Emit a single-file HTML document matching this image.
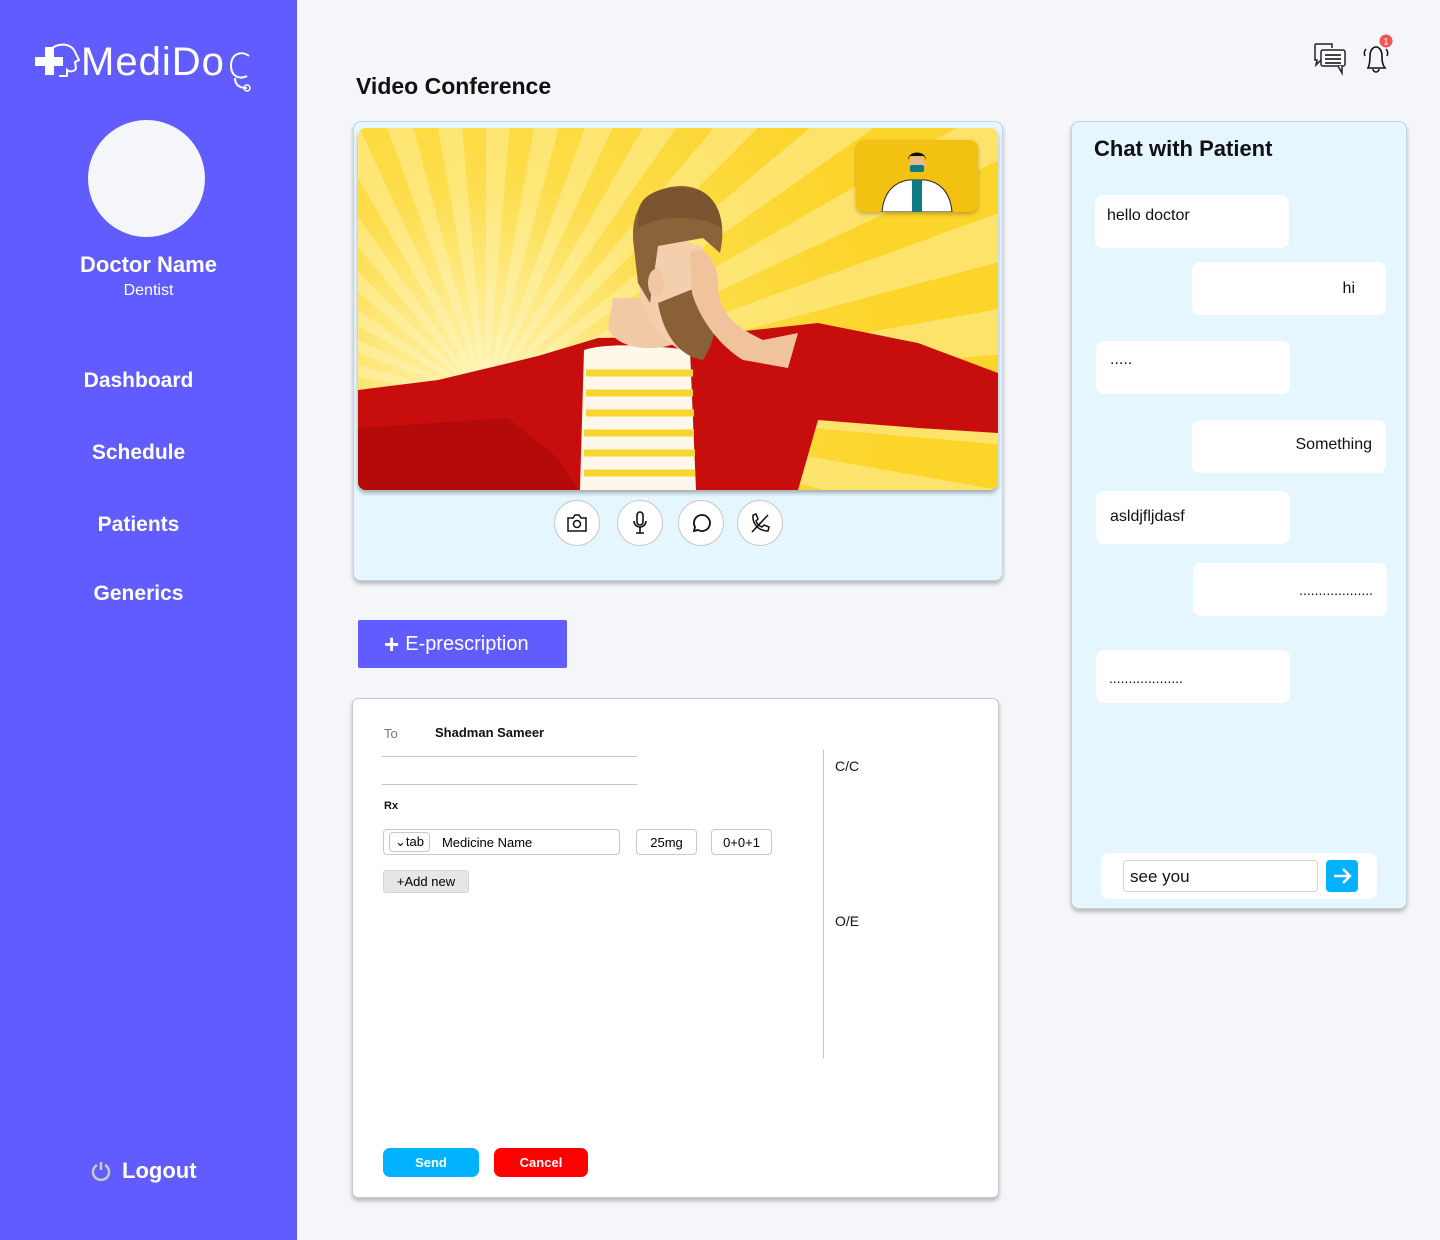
<!DOCTYPE html>
<html><head><meta charset="utf-8">
<style>
*{box-sizing:border-box;margin:0;padding:0}
body{width:1440px;height:1240px;background:#f5f6fa;font-family:"Liberation Sans",Arial,sans-serif;position:relative;overflow:hidden}
.abs{position:absolute}
.side{left:0;top:0;width:297px;height:1240px;background:#605cff;color:#fff}
.nav{position:absolute;width:297px;left:-10px;text-align:center;font-weight:bold;font-size:21px;color:#fff}
.card{background:#e5f6fe;border:1px solid #c9d3dc;border-radius:8px;box-shadow:0 3px 4px rgba(0,0,0,.25)}
.btnc{position:absolute;top:500px;width:46px;height:46px;border-radius:50%;background:#fff;border:1px solid #c8c8c8;display:flex;align-items:center;justify-content:center}
.bub{position:absolute;background:#fff;border-radius:8px;width:194px;height:53px;font-size:16px;color:#111}
.inp{position:absolute;border:1px solid #c9c9c9;border-radius:4px;height:26px;font-size:13px;display:flex;align-items:center}
</style></head><body>
<div class="abs side">
  <div class="abs" style="left:35px;top:38px;color:#fff">
    <svg width="50" height="44" style="position:absolute;left:0;top:4px" viewBox="0 0 50 44"><rect x="0" y="15" width="28" height="9" fill="#fff"/><rect x="10" y="5" width="9" height="28" fill="#fff"/><path d="M16 8 C20 1 36 0 40 10 L44 18 L40 20 L41 26 C40 30 34 30 32 28 L32 34 L24 34" stroke="#fff" stroke-width="2" fill="none"/></svg>
    <span style="position:absolute;left:46px;top:1px;font-family:'Liberation Sans',sans-serif;font-size:40px;letter-spacing:1px;line-height:46px">MediDo</span>
    <svg width="26" height="52" style="position:absolute;left:192px;top:10px" viewBox="0 0 26 52"><path d="M22 8 C14 2 4 6 4 18 C4 28 12 32 20 28 M8 30 C8 38 14 40 20 40" stroke="#fff" stroke-width="2" fill="none"/><circle cx="20" cy="40" r="3" stroke="#fff" stroke-width="1.5" fill="none"/></svg>
  </div>
  <div class="abs" style="left:88px;top:120px;width:117px;height:117px;border-radius:50%;background:#f5f6fa"></div>
  <div class="abs" style="left:0;width:297px;top:252px;text-align:center;font-weight:bold;font-size:22px">Doctor Name</div>
  <div class="abs" style="left:0;width:297px;top:282px;text-align:center;font-size:16px">Dentist</div>
  <div class="nav" style="top:369px">Dashboard</div>
  <div class="nav" style="top:441px">Schedule</div>
  <div class="nav" style="top:513px">Patients</div>
  <div class="nav" style="top:582px">Generics</div>
  <div class="abs" style="left:90px;top:1158px;font-weight:bold;font-size:22px;display:flex;align-items:center;gap:10px">
    <svg width="22" height="22" viewBox="0 0 22 22"><path d="M7 5 A8 8 0 1 0 15 5" stroke="#c8c8c8" stroke-width="2.5" fill="none"/><line x1="11" y1="2" x2="11" y2="10" stroke="#c8c8c8" stroke-width="2.5"/></svg>Logout</div>
</div>

<div class="abs" style="left:356px;top:73px;font-size:23px;font-weight:bold;color:#111">Video Conference</div>

<svg class="abs" style="left:1312px;top:42px" width="36" height="34" viewBox="0 0 36 34"><path d="M3 2 H20 V6 M3 2 V18 L5 18 L4 23 L9 18" stroke="#222" stroke-width="1.5" fill="none"/><rect x="9" y="8" width="24" height="16" rx="2" stroke="#222" stroke-width="1.5" fill="#fff"/><path d="M26 24 L30 31 L30 24" stroke="#222" stroke-width="1.5" fill="#fff"/><line x1="13" y1="13" x2="29" y2="13" stroke="#444" stroke-width="2"/><line x1="13" y1="17" x2="29" y2="17" stroke="#444" stroke-width="2"/><line x1="13" y1="21" x2="29" y2="21" stroke="#444" stroke-width="2"/></svg>
<svg class="abs" style="left:1358px;top:32px" width="40" height="44" viewBox="0 0 40 44"><g transform="translate(2,8)"><path d="M8 28 C10 24 10 20 10 16 C10 10 13 7 16 7 C19 7 22 10 22 16 C22 20 22 24 25 28 Z" stroke="#111" stroke-width="1.6" fill="none"/><path d="M13 29 A3 3 0 0 0 19 29" stroke="#111" stroke-width="1.5" fill="none"/><path d="M6 9 C4 11 4 14 5 16 M26 9 C28 11 28 14 27 16" stroke="#111" stroke-width="1.5" fill="none"/></g><circle cx="28" cy="9" r="6.5" fill="#f05555"/><text x="28" y="12.5" font-size="9" fill="#fff" text-anchor="middle" font-family="Liberation Sans">1</text></svg>

<div class="abs card" style="left:353px;top:121px;width:650px;height:460px"></div>
<div class="abs" style="left:358px;top:128px;width:640px;height:362px;border-radius:8px;overflow:hidden;background:repeating-conic-gradient(from 0deg at 20% 75%,#fde36a 0deg 5deg,#fcd52b 5deg 10deg);box-shadow:0 3px 4px rgba(0,0,0,.3)">
  <div class="abs" style="inset:0;background:radial-gradient(circle at 20% 70%,rgba(255,248,200,.9),rgba(255,240,150,.3) 35%,rgba(255,220,40,0) 70%)"></div>
  <svg class="abs" style="left:0;top:0" width="640" height="362" viewBox="0 0 640 362">
    <path d="M0 262 L80 252 L180 228 L240 210 L340 208 L460 195 L560 215 L640 245 L640 305 L560 300 L460 292 L440 362 L0 362 Z" fill="#c80d0d"/>
    <path d="M0 300 L150 290 L200 330 L220 362 L0 362 Z" fill="#b50a0a"/>
    <path d="M226 222 C250 214 300 218 332 222 L338 362 L222 362 Z" fill="#fff8ea"/>
    <g stroke="#f7d52f" stroke-width="7"><line x1="228" y1="245" x2="335" y2="245"/><line x1="228" y1="265" x2="335" y2="265"/><line x1="228" y1="285" x2="336" y2="285"/><line x1="226" y1="305" x2="336" y2="305"/><line x1="226" y1="325" x2="337" y2="325"/><line x1="226" y1="345" x2="337" y2="345"/></g>
    <path d="M250 200 C258 222 300 226 325 212 L322 170 L255 170 Z" fill="#f1c9a5"/>
    <path d="M285 95 C278 125 278 150 284 175 C295 205 315 220 330 225 C350 210 355 170 345 120 Z" fill="#f3cfae"/>
    <path d="M300 175 C305 205 320 228 345 232 C362 205 362 175 350 155 Z" fill="#8a6038"/>
    <path d="M276 120 C270 80 290 58 325 58 C358 60 370 90 362 125 L345 110 L300 118 L292 175 L280 155 Z" fill="#8b6339"/>
    <path d="M280 85 C282 65 305 58 330 60 C352 62 362 78 364 100 C345 88 305 85 280 100 Z" fill="#7a5530"/>
    <ellipse cx="298" cy="155" rx="8" ry="14" fill="#f0c7a2"/>
    <path d="M332 125 C348 115 362 135 360 165 C366 190 380 200 405 212 L440 205 L430 240 L385 232 C362 218 342 192 334 165 Z" fill="#f0c39c"/>
  </svg>
  <div class="abs" style="left:498px;top:12px;width:122px;height:72px;background:#f3c112;border-radius:8px;box-shadow:0 2px 4px rgba(0,0,0,.25);overflow:hidden">
    <svg width="122" height="72" viewBox="0 0 122 72"><path d="M26 72 C28 50 40 42 52 40 L70 40 C82 42 94 50 96 72 Z" fill="#fff" stroke="#222"/><rect x="56" y="40" width="10" height="32" fill="#0e7a86"/><circle cx="61" cy="24" r="8" fill="#e8b98f"/><path d="M52 20 C52 10 70 10 70 20 L68 16 L54 16 Z" fill="#111"/><rect x="54" y="25" width="14" height="7" rx="2" fill="#0e7a86"/></svg>
  </div>
</div>
<div class="btnc" style="left:554px"><svg width="22" height="18" viewBox="0 0 22 18"><path d="M2 4 H7 L9 1 H13 L15 4 H20 V17 H2 Z" stroke="#111" stroke-width="1.5" fill="none"/><circle cx="11" cy="10" r="3.5" stroke="#111" stroke-width="1.5" fill="none"/></svg></div>
<div class="btnc" style="left:617px"><svg width="16" height="24" viewBox="0 0 16 24"><rect x="5" y="1" width="6" height="13" rx="3" stroke="#111" stroke-width="1.6" fill="none"/><path d="M2 10 A6 6 0 0 0 14 10 M8 16 V22 M4 22 H12" stroke="#111" stroke-width="1.6" fill="none"/></svg></div>
<div class="btnc" style="left:678px"><svg width="22" height="22" viewBox="0 0 22 22"><path d="M4 19 L5 15 A8 8 0 1 1 8 18 Z" stroke="#111" stroke-width="1.8" fill="none"/></svg></div>
<div class="btnc" style="left:737px"><svg width="22" height="22" viewBox="0 0 22 22"><path d="M4 3 L7 2 L9 7 L7 9 C8 12 10 14 13 15 L15 13 L20 15 L19 19 C10 19 3 12 4 3" stroke="#111" stroke-width="1.5" fill="none"/><line x1="3" y1="20" x2="19" y2="3" stroke="#111" stroke-width="1.6"/></svg></div>

<div class="abs" style="left:358px;top:620px;width:209px;height:48px;background:#605cff;border-radius:2px;color:#fff;font-size:20px;display:flex;align-items:center;padding-left:26px"><span style="font-size:26px;font-weight:bold;margin-right:6px;line-height:1">+</span>E-prescription</div>

<div class="abs" style="left:352px;top:698px;width:647px;height:500px;background:#fff;border:1px solid #c9c9c9;border-radius:6px;box-shadow:0 3px 4px rgba(0,0,0,.25)"></div>
<div class="abs" style="left:384px;top:726px;font-size:13px;color:#777">To</div>
<div class="abs" style="left:435px;top:725px;font-size:13px;font-weight:bold;color:#111">Shadman Sameer</div>
<div class="abs" style="left:382px;top:756px;width:255px;height:1px;background:#c8c8c8"></div>
<div class="abs" style="left:382px;top:784px;width:255px;height:1px;background:#c8c8c8"></div>
<div class="abs" style="left:384px;top:800px;font-size:11px;font-weight:bold;color:#111">Rx</div>
<div class="inp" style="left:383px;top:829px;width:237px"><span style="border:1px solid #c9c9c9;border-radius:4px;margin-left:5px;padding:1px 5px;height:20px;font-size:13px">&#8964;tab</span><span style="margin-left:12px">Medicine Name</span></div>
<div class="inp" style="left:636px;top:829px;width:61px;justify-content:center">25mg</div>
<div class="inp" style="left:711px;top:829px;width:61px;justify-content:center">0+0+1</div>
<div class="abs" style="left:383px;top:870px;width:86px;height:23px;background:#e6e6e6;border:1px solid #d6d6d6;border-radius:3px;font-size:13px;display:flex;align-items:center;justify-content:center">+Add new</div>
<div class="abs" style="left:823px;top:750px;width:1px;height:308px;background:#c8c8c8"></div>
<div class="abs" style="left:835px;top:758px;font-size:14px;color:#111">C/C</div>
<div class="abs" style="left:835px;top:913px;font-size:14px;color:#111">O/E</div>
<div class="abs" style="left:383px;top:1148px;width:96px;height:29px;background:#00b2ff;border-radius:7px;color:#fff;font-size:13px;font-weight:bold;display:flex;align-items:center;justify-content:center">Send</div>
<div class="abs" style="left:494px;top:1148px;width:94px;height:29px;background:#ff0000;border-radius:7px;color:#fff;font-size:13px;font-weight:bold;display:flex;align-items:center;justify-content:center">Cancel</div>

<div class="abs card" style="left:1071px;top:121px;width:336px;height:788px"></div>
<div class="abs" style="left:1094px;top:136px;font-size:22px;font-weight:bold;color:#111">Chat with Patient</div>
<div class="bub" style="left:1095px;top:195px"><span style="position:absolute;left:12px;top:12px">hello doctor</span></div>
<div class="bub" style="left:1192px;top:262px"><span style="position:absolute;right:31px;top:18px">hi</span></div>
<div class="bub" style="left:1096px;top:341px"><span style="position:absolute;left:14px;top:10px">.....</span></div>
<div class="bub" style="left:1192px;top:420px"><span style="position:absolute;right:14px;top:16px">Something</span></div>
<div class="bub" style="left:1096px;top:491px"><span style="position:absolute;left:14px;top:17px">asldjfljdasf</span></div>
<div class="bub" style="left:1193px;top:563px"><span style="position:absolute;right:14px;top:19px;font-size:14px">...................</span></div>
<div class="bub" style="left:1096px;top:650px"><span style="position:absolute;left:13px;top:20px;font-size:14px">...................</span></div>
<div class="abs" style="left:1101px;top:853px;width:276px;height:46px;background:#fff;border-radius:8px"></div>
<div class="abs" style="left:1123px;top:860px;width:195px;height:32px;border:1px solid #d6d6d6;border-radius:4px;font-size:17px;padding:6px 6px;color:#111">see you</div>
<div class="abs" style="left:1326px;top:860px;width:32px;height:32px;background:#00b2ff;border-radius:4px"><svg width="32" height="32" viewBox="0 0 32 32"><path d="M8 16 H24 M17 9 L24 16 L17 23" stroke="#fff" stroke-width="2.5" fill="none"/></svg></div>
</body></html>
